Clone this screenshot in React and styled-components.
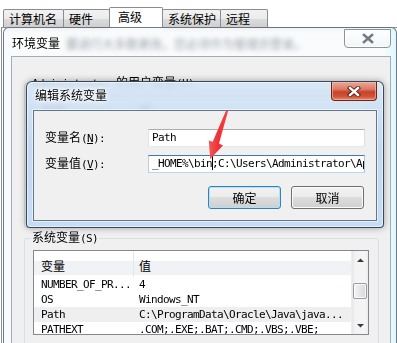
import React from "react";
import styled, { createGlobalStyle, css } from "styled-components";

const GlobalStyle = createGlobalStyle`
  html, body {
    margin: 0;
    padding: 0;
    background: #ffffff;
  }
  body {
    font-family: "Noto Sans CJK SC", "Liberation Sans", sans-serif;
    font-size: 12px;
    color: #000;
  }
  * {
    box-sizing: border-box;
  }
`;

const monoFont = css`
  font-family: "DejaVu Sans Mono", "Liberation Mono", monospace;
  font-size: 11px;
  letter-spacing: -0.62px;
  white-space: pre;
`;

const Screen = styled.div`
  position: relative;
  width: 397px;
  height: 343px;
  overflow: hidden;
  background: #ffffff;
`;

const Mono = styled.span`
  ${monoFont}
`;

/* ---------- system properties window (behind) ---------- */

const PropsWindow = styled.div`
  display: flex;
  flex-direction: column;
  height: 100%;
  padding-top: 7px;
`;

const TabStrip = styled.div`
  display: flex;
  align-items: flex-end;
  height: 20px;
  padding-left: 4px;
  position: relative;
  z-index: 1;
`;

const Tab = styled.div`
  width: ${(p) => p.$w}px;
  height: ${(p) => (p.$active ? 21 : 18)}px;
  margin-left: -1px;
  margin-bottom: ${(p) => (p.$active ? -1 : 0)}px;
  padding: ${(p) => (p.$active ? "0 0 2px 8px" : "1px 0 0 5px")};
  border: 1px solid #898c95;
  border-bottom: none;
  border-radius: 2px 2px 0 0;
  background: ${(p) =>
    p.$active
      ? "#ffffff"
      : "linear-gradient(#f2f2f2 0%, #ebebeb 50%, #dddddd 50%, #cfcfcf 100%)"};
  position: relative;
  z-index: ${(p) => (p.$active ? 2 : 1)};
  display: flex;
  align-items: center;
  font-size: 12px;
  line-height: 14px;
  white-space: nowrap;
`;

const TabPanel = styled.div`
  flex: 1;
  margin-left: 1px;
  border-top: 1px solid #898c95;
  border-left: 1px solid #898c95;
  background: #ffffff;
  padding: 9px 0 0 16px;
`;

const PanelNote = styled.div`
  font-size: 12px;
  line-height: 14px;
  color: #303a48;
  margin-left: 48px;
`;

/* ---------- shared window chrome ---------- */

const TitleBar = styled.div`
  display: flex;
  align-items: flex-start;
  height: ${(p) => p.$h}px;
  flex: none;
`;

const Title = styled.div`
  margin: ${(p) => p.$top}px 0 0 ${(p) => p.$left}px;
  font-size: 12px;
  line-height: 14px;
  color: #000;
  text-shadow: 0 0 6px #fff, 0 0 4px #fff, 0 0 2px #fff, 0 0 1px #fff;
`;

const CloseButton = styled.div`
  margin: ${(p) => p.$top}px ${(p) => p.$right}px 0 auto;
  width: ${(p) => p.$w}px;
  height: ${(p) => p.$h}px;
  display: flex;
  align-items: center;
  justify-content: center;
  border: 1px solid ${(p) => (p.$hot ? "#6b2418" : "#8d939b")};
  border-top: ${(p) => (p.$hot ? "none" : "1px solid #8d939b")};
  border-radius: 0 0 4px 4px;
  background: ${(p) =>
    p.$hot
      ? "linear-gradient(#e9a99a 0%, #dc7b66 40%, #c7422b 55%, #cf5339 80%, #e48a6c 100%)"
      : "linear-gradient(rgba(255,255,255,0.85), rgba(240,243,246,0.75))"};
  box-shadow: ${(p) =>
    p.$hot
      ? "inset 0 0 0 1px rgba(255,190,170,0.6)"
      : "inset 0 0 0 1px rgba(255,255,255,0.9)"};
`;

const CloseGlyph = ({ hot }) => (
  <svg width="14" height="11" viewBox="0 0 14 11">
    {hot && (
      <path
        d="M3 2 L11 9 M11 2 L3 9"
        stroke="#4d1a10"
        strokeWidth="4.2"
        strokeLinecap="square"
      />
    )}
    <path
      d="M3 2 L11 9 M11 2 L3 9"
      stroke={hot ? "#ffffff" : "#747a82"}
      strokeWidth={hot ? 2.4 : 2.6}
      strokeLinecap="square"
    />
  </svg>
);

/* ---------- environment variables window ---------- */

const EnvWindow = styled.div`
  position: absolute;
  left: 3px;
  top: 27px;
  width: 394px;
  height: 322px;
  display: flex;
  flex-direction: column;
  border: 1px solid rgba(70, 80, 92, 0.75);
  border-radius: 6px 6px 0 0;
  background: linear-gradient(
    90deg,
    rgba(244, 247, 250, 0.55) 0%,
    rgba(244, 247, 250, 0.55) 97%,
    rgba(214, 246, 255, 0.85) 100%
  );
  backdrop-filter: blur(2.5px);
  z-index: 2;
`;

const EnvClient = styled.div`
  flex: 1;
  margin: 0 5px 0 7px;
  border: 1px solid #a3adb8;
  background: #f0f0f0;
  padding-top: 18px;
  display: flex;
  flex-direction: column;
  overflow: hidden;
`;

const Group = styled.fieldset`
  margin: ${(p) => p.$top || 0}px 11px 0 12px;
  padding: 0 6px ${(p) => p.$bottom || 0}px 6px;
  border: 1px solid #d5dfe5;
  border-radius: 3px;
  min-width: 0;
`;

const Legend = styled.legend`
  padding: 0 1px;
  font-size: 12px;
  line-height: 14px;
  white-space: nowrap;
`;

const ListView = styled.div`
  display: flex;
  width: 336px;
  height: ${(p) => p.$h}px;
  margin: 4px 0 0 2px;
  border: 1px solid #828790;
  background: #ffffff;
  overflow: hidden;
`;

const ListBody = styled.div`
  flex: 1;
  min-width: 0;
  display: flex;
  flex-direction: column;
`;

const HeaderRow = styled.div`
  display: flex;
  height: 26px;
  flex: none;
  background: linear-gradient(
    #ffffff 0,
    #ffffff 10px,
    #f0f2f5 10px,
    #f0f2f5 24px,
    #ffffff 24px
  );
`;

const HeaderCell = styled.div`
  width: ${(p) => (p.$w ? `${p.$w}px` : "auto")};
  flex: ${(p) => (p.$w ? "none" : 1)};
  padding: 8px 0 0 ${(p) => (p.$w ? 7 : 5)}px;
  border-right: ${(p) => (p.$w ? "1px solid #e3e8ee" : "none")};
  font-size: 12px;
  line-height: 14px;
`;

const Row = styled.div`
  display: flex;
  height: 15px;
  flex: none;
  background: ${(p) => (p.$selected ? "#efefef" : "transparent")};
`;

const Cell = styled.div`
  ${monoFont}
  line-height: 15px;
  width: ${(p) => (p.$w ? `${p.$w}px` : "auto")};
  flex: ${(p) => (p.$w ? "none" : 1)};
  padding-left: ${(p) => (p.$w ? 7 : 5)}px;
  overflow: hidden;
`;

const ScrollBar = styled.div`
  width: 17px;
  flex: none;
  display: flex;
  flex-direction: column;
  background: linear-gradient(90deg, #e6e6e6 0%, #f3f3f3 20%, #f5f5f5 80%, #ececec 100%);
  border-left: 1px solid #ededed;
`;

const ScrollArrow = styled.div`
  height: 17px;
  flex: none;
  display: flex;
  align-items: center;
  justify-content: center;
`;

const ScrollTrack = styled.div`
  flex: 1;
  padding: 0 1px;
`;

const Thumb = styled.div`
  height: ${(p) => p.$h}px;
  border: 1px solid #979ba2;
  border-radius: 2px;
  background: linear-gradient(90deg, #f4f4f4 0%, #e6e6e6 50%, #d8d8d8 100%);
  box-shadow: inset 0 0 0 1px rgba(255, 255, 255, 0.8);
`;

const Button = styled.button`
  width: 73px;
  height: 23px;
  padding: 0;
  border: 1px solid ${(p) => (p.$default ? "#3c7fb1" : "#707070")};
  border-radius: 3px;
  background: linear-gradient(#f2f2f2 0%, #ebebeb 49%, #dddddd 50%, #cfcfcf 100%);
  box-shadow: inset 0 0 0 1px ${(p) => (p.$default ? "#a8e4fa" : "#fbfbfb")};
  font-family: "Noto Sans CJK SC", sans-serif;
  font-size: 12px;
  line-height: 14px;
  color: #000;
`;

/* ---------- edit dialog ---------- */

const EditDialog = styled.div`
  position: absolute;
  left: 26px;
  top: 81px;
  width: 358px;
  height: 147px;
  display: flex;
  flex-direction: column;
  border: 1px solid rgba(38, 54, 76, 0.9);
  border-radius: 6px 6px 4px 4px;
  background: linear-gradient(
    180deg,
    rgba(214, 230, 246, 0.9) 0%,
    rgba(190, 214, 240, 0.88) 45%,
    rgba(194, 218, 243, 0.9) 100%
  );
  backdrop-filter: blur(3px);
  box-shadow: 0 0 7px rgba(0, 0, 0, 0.35), inset 0 0 0 1px rgba(255, 255, 255, 0.55);
  z-index: 3;
`;

const DialogClient = styled.div`
  flex: 1;
  margin: 0 6px 6px 6px;
  border: 1px solid #63768c;
  background: #f0f0f0;
  box-shadow: 0 0 0 1px rgba(255, 255, 255, 0.55);
  padding: 18px 11px 10px 11px;
  display: flex;
  flex-direction: column;
`;

const FieldGrid = styled.div`
  display: grid;
  grid-template-columns: 103px 217px;
  row-gap: 8px;
  align-items: center;
`;

const FieldLabel = styled.label`
  font-size: 12px;
  line-height: 16px;
  white-space: nowrap;
  u {
    text-decoration: underline;
    text-underline-offset: 1px;
  }
`;

const TextBox = styled.div`
  ${monoFont}
  height: 18px;
  padding: 0 3px;
  border: 1px solid;
  border-color: ${(p) =>
    p.$focused
      ? "#3d7bad #a4c9e3 #b7d9ed #b5cfe7"
      : "#abadb3 #dbdfe6 #e3e9ef #e2e3ea"};
  background: #ffffff;
  line-height: 16px;
  overflow: hidden;
`;

const Caret = styled.span`
  display: inline-block;
  width: 1px;
  height: 14px;
  margin-right: -1px;
  vertical-align: -3px;
  background: #000;
`;

const DialogButtons = styled.div`
  display: flex;
  justify-content: flex-end;
  gap: 10px;
  margin-top: 13px;
  padding-right: 1px;
`;

const ArrowMark = styled.svg`
  position: absolute;
  left: 200px;
  top: 104px;
  z-index: 4;
`;

const tabs = [
  { label: "计算机名", w: 61 },
  { label: "硬件", w: 47 },
  { label: "高级", w: 54, active: true },
  { label: "系统保护", w: 59 },
  { label: "远程", w: 48 },
];

const systemRows = [
  { name: "NUMBER_OF_PR...", value: "4" },
  { name: "OS", value: "Windows_NT" },
  { name: "Path", value: "C:\\ProgramData\\Oracle\\Java\\java...", selected: true },
  { name: "PATHEXT", value: ".COM;.EXE;.BAT;.CMD;.VBS;.VBE;" },
];

const VarList = ({ rows, height, scroll }) => (
  <ListView $h={height}>
    <ListBody>
      <HeaderRow>
        <HeaderCell $w={100}>变量</HeaderCell>
        <HeaderCell>值</HeaderCell>
      </HeaderRow>
      {rows.map((r) => (
        <Row key={r.name} $selected={r.selected}>
          <Cell $w={100}>{r.name}</Cell>
          <Cell>{r.value}</Cell>
        </Row>
      ))}
    </ListBody>
    {scroll && (
      <ScrollBar>
        <ScrollArrow>
          <svg width="9" height="6" viewBox="0 0 9 6">
            <polygon points="1,5 4.5,1.5 8,5" fill="#3b3b3b" />
          </svg>
        </ScrollArrow>
        <ScrollTrack>
          <Thumb $h={16} style={{ marginTop: 15 }} />
        </ScrollTrack>
        <ScrollArrow>
          <svg width="9" height="6" viewBox="0 0 9 6">
            <polygon points="1,1 4.5,4.5 8,1" fill="#3b3b3b" />
          </svg>
        </ScrollArrow>
      </ScrollBar>
    )}
  </ListView>
);

export default function App() {
  return (
    <>
      <GlobalStyle />
      <Screen>
        <PropsWindow>
          <TabStrip>
            {tabs.map((t) => (
              <Tab key={t.label} $w={t.w} $active={t.active}>
                {t.label}
              </Tab>
            ))}
          </TabStrip>
          <TabPanel>
            <PanelNote>要进行大多数更改，您必须作为管理员登录。</PanelNote>
          </TabPanel>
        </PropsWindow>

        <EnvWindow>
          <TitleBar $h={28}>
            <Title $top={8} $left={8}>
              环境变量
            </Title>
            <CloseButton $top={1} $right={5} $w={47} $h={19}>
              <CloseGlyph />
            </CloseButton>
          </TitleBar>
          <EnvClient>
            {/* user variables group: mostly hidden by the edit dialog */}
            <Group $bottom={36}>
              <Legend>
                <Mono>Administrator </Mono>的用户变量<Mono>(U)</Mono>
              </Legend>
              <VarList rows={[]} height={96} />
            </Group>
            <Group $top={2} $bottom={10}>
              <Legend>
                系统变量<Mono>(S)</Mono>
              </Legend>
              <VarList rows={systemRows} height={85} scroll />
            </Group>
          </EnvClient>
        </EnvWindow>

        <EditDialog>
          <TitleBar $h={28}>
            <Title $top={6} $left={8}>
              编辑系统变量
            </Title>
            <CloseButton $hot $top={0} $right={6} $w={46} $h={19}>
              <CloseGlyph hot />
            </CloseButton>
          </TitleBar>
          <DialogClient>
            <FieldGrid>
              <FieldLabel>
                变量名<Mono>(<u>N</u>):</Mono>
              </FieldLabel>
              <TextBox>Path</TextBox>
              <FieldLabel>
                变量值<Mono>(<u>V</u>):</Mono>
              </FieldLabel>
              <TextBox $focused>
                _HOME%\bin
                <Caret />
                ;C:\Users\Administrator\AppData\Local
              </TextBox>
            </FieldGrid>
            <DialogButtons>
              <Button $default>确定</Button>
              <Button>取消</Button>
            </DialogButtons>
          </DialogClient>
        </EditDialog>

        <ArrowMark width="36" height="60" viewBox="0 0 36 60">
          <defs>
            <linearGradient id="arrowFill" x1="0" y1="0" x2="1" y2="0">
              <stop offset="0" stopColor="#f25a5a" />
              <stop offset="0.5" stopColor="#ef2f35" />
              <stop offset="1" stopColor="#f04a4a" />
            </linearGradient>
          </defs>
          <polygon
            points="26.1,6.4 28.1,7.0 19.0,39.6 23.0,41.4 10.2,55 8.8,36.4 12.7,37.8"
            fill="url(#arrowFill)"
          />
        </ArrowMark>
      </Screen>
    </>
  );
}
